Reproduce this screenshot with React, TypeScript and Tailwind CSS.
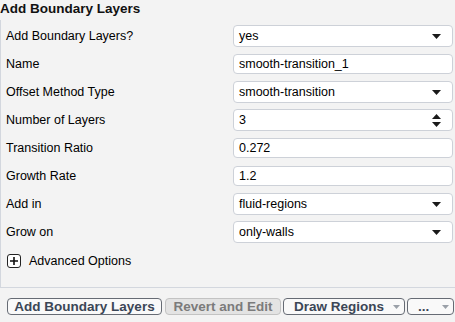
import React from 'react';

type Field = {
  label: string;
  value: string;
  kind: 'select' | 'text' | 'spin';
};

const fields: Field[] = [
  { label: 'Add Boundary Layers?', value: 'yes', kind: 'select' },
  { label: 'Name', value: 'smooth-transition_1', kind: 'text' },
  { label: 'Offset Method Type', value: 'smooth-transition', kind: 'select' },
  { label: 'Number of Layers', value: '3', kind: 'spin' },
  { label: 'Transition Ratio', value: '0.272', kind: 'text' },
  { label: 'Growth Rate', value: '1.2', kind: 'text' },
  { label: 'Add in', value: 'fluid-regions', kind: 'select' },
  { label: 'Grow on', value: 'only-walls', kind: 'select' },
];

const Caret: React.FC<{ className?: string }> = ({ className }) => (
  <svg width="9" height="5" viewBox="0 0 9 5" className={className}>
    <path d="M0 0h9L4.5 5z" fill="currentColor" />
  </svg>
);

const Control: React.FC<{ field: Field }> = ({ field }) => {
  if (field.kind === 'text') {
    return (
      <div className="flex h-[20px] w-[220px] items-center rounded-[4px] border border-[#cdd1d8] bg-white px-[5px] text-[12.5px] text-black">
        {field.value}
      </div>
    );
  }
  return (
    <div className="flex h-[22px] w-[220px] items-center justify-between rounded-[4px] border border-[#cdd1d8] bg-white pl-[5px] pr-[11px] text-[12.5px] text-black">
      <span>{field.value}</span>
      {field.kind === 'select' ? (
        <Caret className="text-[#1a1a1a]" />
      ) : (
        <div className="flex flex-col gap-[3px]">
          <svg width="9" height="5" viewBox="0 0 9 5">
            <path d="M4.5 0L9 5H0z" fill="#1a1a1a" />
          </svg>
          <Caret className="text-[#1a1a1a]" />
        </div>
      )}
    </div>
  );
};

export default function App() {
  return (
    <div
      className="flex h-[322px] w-[455px] flex-col bg-[#f3f3f3]"
      style={{ fontFamily: '"Liberation Sans", Arial, sans-serif' }}
    >
      <div className="h-[20px] text-[13.5px] font-bold leading-[17px] text-[#111]">Add Boundary Layers</div>

      <div className="flex h-[268px] flex-col border-b border-l border-[#d3d7de] pt-[5px]">
        <div className="flex flex-col gap-[6px]">
          {fields.map(f => (
            <div key={f.label} className="flex h-[22px] items-center justify-between pr-[2px]">
              <span className="pl-[5px] pt-[1px] text-[12.5px] text-black">{f.label}</span>
              <Control field={f} />
            </div>
          ))}
        </div>

        <div className="mt-[9px] flex items-center gap-[8px] pl-[6px]">
          <div className="flex h-[14px] w-[14px] items-center justify-center rounded-[3px] border border-[#222] bg-white">
            <svg width="8" height="8" viewBox="0 0 8 8">
              <path d="M4 0v8M0 4h8" stroke="#111" strokeWidth="1.6" />
            </svg>
          </div>
          <span className="text-[12.5px] text-black">Advanced Options</span>
        </div>
      </div>

      <div className="flex gap-[2px] pl-[7px] pt-[10px]">
        <button className="mr-[1px] h-[17px] w-[155px] rounded-[4px] border border-[#666b74] bg-[#f9f9f9] text-[13.5px] font-bold leading-[15px] text-[#3b4656]">
          Add Boundary Layers
        </button>
        <button className="h-[17px] w-[116px] rounded-[4px] border border-[#c3c3c3] bg-[#e3e3e3] text-[13.5px] font-bold leading-[15px] text-[#7b7b7b]">
          Revert and Edit
        </button>
        <button className="flex h-[17px] w-[122px] items-center justify-between rounded-[4px] border border-[#666b74] bg-[#f9f9f9] pl-[10px] pr-[4px] text-[13.5px] font-bold leading-[15px] text-[#3b4656]">
          <span>Draw Regions</span>
          <svg width="7" height="4" viewBox="0 0 7 4">
            <path d="M0 0h7L3.5 4z" fill="#9aa0a8" />
          </svg>
        </button>
        <button className="flex h-[17px] w-[47px] items-center justify-between rounded-[4px] border border-[#666b74] bg-[#f9f9f9] pl-[10px] pr-[4px] text-[13.5px] font-bold leading-[15px] text-[#3b4656]">
          <span>...</span>
          <svg width="7" height="4" viewBox="0 0 7 4">
            <path d="M0 0h7L3.5 4z" fill="#9aa0a8" />
          </svg>
        </button>
      </div>
    </div>
  );
}
